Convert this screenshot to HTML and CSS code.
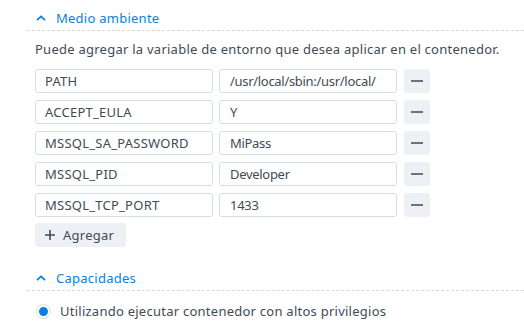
FILE: index.html
```html
<!DOCTYPE html>
<html lang="es">
<head>
    <meta charset="UTF-8">
    <title>Medio ambiente</title>
    <link rel="stylesheet" href="styles.css">
</head>
<body>

<div class="panel">
    <div class="section-head">
        <svg class="chevron" viewBox="0 0 10 6" width="10" height="6"><path d="M1 5.2 L5 1.4 L9 5.2" fill="none" stroke="#0a7fe0" stroke-width="1.8"/></svg>
        <span>Medio ambiente</span>
    </div>

    <div class="section-body">
        <p class="desc">Puede agregar la variable de entorno que desea aplicar en el contenedor.</p>

        <div class="env-list">
            <div class="env-row">
                <div class="field">PATH</div>
                <div class="field">/usr/local/sbin:/usr/local/</div>
                <button class="remove-btn"><span class="minus"></span></button>
            </div>
            <div class="env-row">
                <div class="field">ACCEPT_EULA</div>
                <div class="field">Y</div>
                <button class="remove-btn"><span class="minus"></span></button>
            </div>
            <div class="env-row">
                <div class="field">MSSQL_SA_PASSWORD</div>
                <div class="field">MiPass</div>
                <button class="remove-btn"><span class="minus"></span></button>
            </div>
            <div class="env-row">
                <div class="field">MSSQL_PID</div>
                <div class="field">Developer</div>
                <button class="remove-btn"><span class="minus"></span></button>
            </div>
            <div class="env-row">
                <div class="field">MSSQL_TCP_PORT</div>
                <div class="field">1433</div>
                <button class="remove-btn"><span class="minus"></span></button>
            </div>
        </div>

        <button class="add-btn">
            <svg viewBox="0 0 10 10" width="10" height="10"><path d="M5 0 V10 M0 5 H10" stroke="#414b55" stroke-width="1.6"/></svg>
            Agregar
        </button>
    </div>

    <div class="section-head second">
        <svg class="chevron" viewBox="0 0 10 6" width="10" height="6"><path d="M1 5.2 L5 1.4 L9 5.2" fill="none" stroke="#0a7fe0" stroke-width="1.8"/></svg>
        <span>Capacidades</span>
    </div>

    <div class="section-body radios">
        <label class="radio-row">
            <span class="radio"></span>
            Utilizando ejecutar contenedor con altos privilegios
        </label>
    </div>
</div>

</body>
</html>
```

FILE: styles.css
```css
body {
    margin: 0;
    padding: 0;
    background-color: #ffffff;
    font-family: "Noto Sans", sans-serif;
    font-size: 13px;
    letter-spacing: 0.25px;
    color: #414b55;
}
.panel {
    padding: 5px 0 0 27px;
}
.section-head {
    display: flex;
    align-items: center;
    gap: 10px;
    height: 25px;
    padding-left: 9px;
    color: #0a80e2;
    font-size: 13px;
    border-bottom: 1px dashed #d3d8de;
}
.section-head.second {
    margin-top: 18px;
}
.section-body {
    padding: 10px 0 0 8px;
}
.section-body.radios {
    padding-top: 11px;
}
.desc {
    margin: 0 0 11px 0;
    line-height: 17px;
}
.env-list {
    display: flex;
    flex-direction: column;
    gap: 7px;
}
.env-row {
    display: flex;
    gap: 6px;
}
.field {
    box-sizing: border-box;
    width: 178px;
    height: 24px;
    line-height: 22px;
    padding: 0 9px;
    border: 1px solid #d7dde5;
    border-radius: 3px;
    white-space: nowrap;
    overflow: hidden;
}
.field + .field {
    padding-left: 10px;
    letter-spacing: -0.3px;
}
.remove-btn {
    margin-left: 1px;
    width: 26px;
    height: 24px;
    border: none;
    border-radius: 3px;
    background-color: #edf0f5;
    display: flex;
    align-items: center;
    justify-content: center;
    padding: 0;
}
.minus {
    display: block;
    width: 12px;
    height: 2px;
    background-color: #6b737d;
}
.add-btn {
    margin-top: 6px;
    width: 91px;
    height: 24px;
    border: none;
    border-radius: 3px;
    background-color: #edf0f5;
    font-family: "Noto Sans", sans-serif;
    font-size: 13px;
    letter-spacing: 0.25px;
    color: #414b55;
    display: flex;
    align-items: center;
    gap: 8px;
    padding: 0 10px;
}
.radio-row {
    display: flex;
    align-items: center;
    gap: 10px;
    padding-left: 2px;
}
.radio {
    box-sizing: border-box;
    width: 13px;
    height: 13px;
    border-radius: 50%;
    background-color: #0a80e2;
    border: 2px solid #ffffff;
    box-shadow: 0 0 0 1px #dfe3e8;
}
```
